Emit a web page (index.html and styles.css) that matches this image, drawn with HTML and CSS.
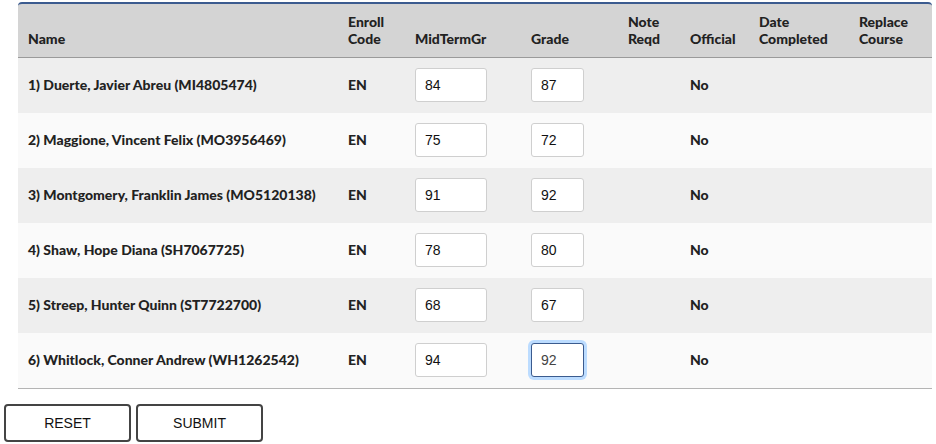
FILE: index.html
```html
<!DOCTYPE html>
<html>
<head>
<meta charset="utf-8">
<link rel="stylesheet" href="styles.css">
</head>
<body>
<div class="wrap">
<table class="grades">
<colgroup>
<col class="c-name"><col class="c-enroll"><col class="c-mid"><col class="c-grade"><col class="c-note"><col class="c-off"><col class="c-date"><col class="c-rep">
</colgroup>
<thead>
<tr>
<th>Name</th><th>Enroll<br>Code</th><th>MidTermGr</th><th>Grade</th><th>Note<br>Reqd</th><th>Official</th><th>Date<br>Completed</th><th>Replace<br>Course</th>
</tr>
</thead>
<tbody>
<tr><td>1) Duerte, Javier Abreu (MI4805474)</td><td>EN</td><td><input class="in-mid" value="84"></td><td><input class="in-grade" value="87"></td><td></td><td>No</td><td></td><td></td></tr>
<tr><td>2) Maggione, Vincent Felix (MO3956469)</td><td>EN</td><td><input class="in-mid" value="75"></td><td><input class="in-grade" value="72"></td><td></td><td>No</td><td></td><td></td></tr>
<tr><td>3) Montgomery, Franklin James (MO5120138)</td><td>EN</td><td><input class="in-mid" value="91"></td><td><input class="in-grade" value="92"></td><td></td><td>No</td><td></td><td></td></tr>
<tr><td>4) Shaw, Hope Diana (SH7067725)</td><td>EN</td><td><input class="in-mid" value="78"></td><td><input class="in-grade" value="80"></td><td></td><td>No</td><td></td><td></td></tr>
<tr><td>5) Streep, Hunter Quinn (ST7722700)</td><td>EN</td><td><input class="in-mid" value="68"></td><td><input class="in-grade" value="67"></td><td></td><td>No</td><td></td><td></td></tr>
<tr><td>6) Whitlock, Conner Andrew (WH1262542)</td><td>EN</td><td><input class="in-mid" value="94"></td><td><input class="in-grade focused" value="92"></td><td></td><td>No</td><td></td><td></td></tr>
</tbody>
</table>
</div>
<div class="actions">
<button class="btn">RESET</button>
<button class="btn">SUBMIT</button>
</div>
</body>
</html>
```
FILE: styles.css
```css
html, body { margin: 0; padding: 0; background: #fff; }
body { font-family: "Lato", "Liberation Sans", sans-serif; color: #222; }
.wrap { padding: 2px 4px 0 18px; }
.grades {
  width: 914px;
  table-layout: fixed;
  border-collapse: separate;
  border-spacing: 0;
  font-size: 14px;
  font-weight: 900;
}
.c-name { width: 320px; }
.c-enroll { width: 67px; }
.c-mid { width: 116px; }
.c-grade { width: 97px; }
.c-note { width: 62px; }
.c-off { width: 69px; }
.c-date { width: 100px; }
.c-rep { width: 83px; }
.grades thead th {
  background: #d4d4d4;
  border-top: 2px solid #3b5b8f;
  border-bottom: 1px solid #9a9a9a;
  text-align: left;
  vertical-align: bottom;
  padding: 0 2px 10px 10px;
  height: 43px;
  line-height: 17px;
  font-weight: 900;
}
.grades thead th:first-child { border-top-left-radius: 4px; }
.grades thead th:last-child { border-top-right-radius: 4px; }
.grades tbody td {
  height: 53px;
  padding: 0 0 2px 10px;
  vertical-align: middle;
  line-height: 16px;
  white-space: nowrap;
}
.grades tbody tr:nth-child(odd) td { background: #eeeeee; }
.grades tbody tr:nth-child(even) td { background: #fafafa; }
.grades tbody tr:last-child td { border-bottom: 1px solid #b4b4b4; }
.grades input {
  box-sizing: border-box;
  height: 34px;
  border: 1px solid #cfcfcf;
  border-radius: 3px;
  background: #fff;
  font-family: "Liberation Sans", Arial, sans-serif;
  font-size: 14px;
  font-weight: 400;
  color: #111;
  padding: 0 9px;
  outline: none;
  display: block;
}
.in-mid { width: 72px; }
.in-grade { width: 53px; }
.grades input.focused {
  border-color: #3b5b8f;
  box-shadow: 0 0 0 3px #bcdcff;
  color: #444;
}
.actions {
  display: flex;
  gap: 5px;
  padding: 15px 0 0 4px;
}
.btn {
  box-sizing: border-box;
  width: 127px;
  height: 38px;
  border: 2px solid #444;
  border-radius: 4px;
  background: #fff;
  font-family: "Liberation Sans", Arial, sans-serif;
  font-size: 14px;
  color: #111;
}
```
